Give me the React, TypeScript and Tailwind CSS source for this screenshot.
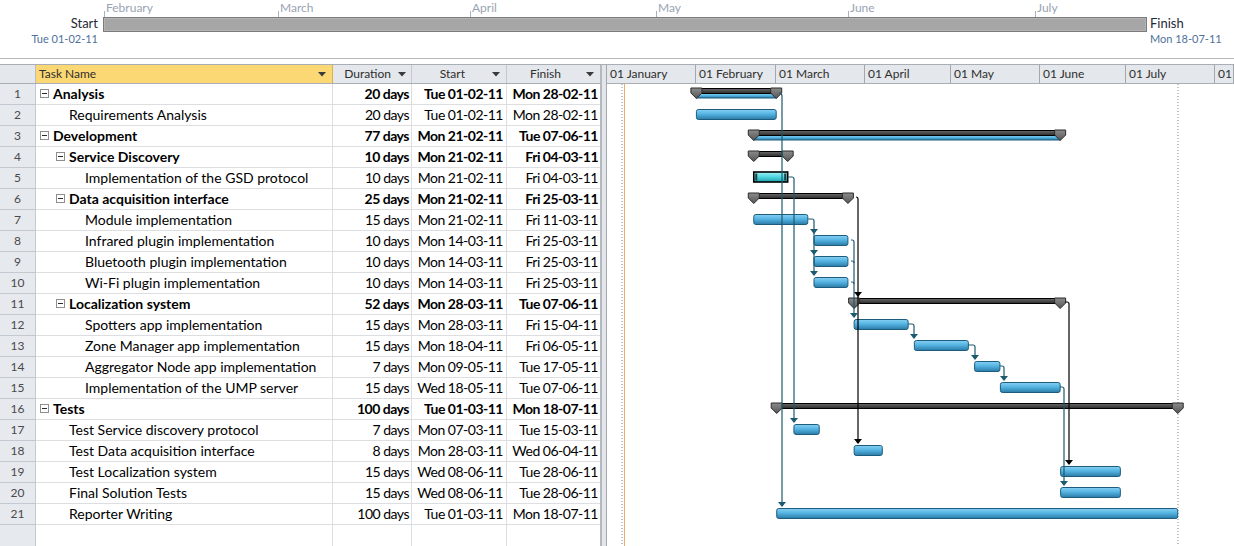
import React from 'react'

type Task = {
  id: number
  name: string
  level: number
  dur: string
  start: string
  finish: string
  s: number
  f: number
  summary?: boolean
  rollup?: boolean
  hl?: boolean
}

// s / f = day of year (0 = 01 Jan 2011)
const tasks: Task[] = [
  { id: 1, name: 'Analysis', level: 0, dur: '20 days', start: 'Tue 01-02-11', finish: 'Mon 28-02-11', s: 31, f: 58, summary: true, rollup: true },
  { id: 2, name: 'Requirements Analysis', level: 1, dur: '20 days', start: 'Tue 01-02-11', finish: 'Mon 28-02-11', s: 31, f: 58 },
  { id: 3, name: 'Development', level: 0, dur: '77 days', start: 'Mon 21-02-11', finish: 'Tue 07-06-11', s: 51, f: 157, summary: true, rollup: true },
  { id: 4, name: 'Service Discovery', level: 1, dur: '10 days', start: 'Mon 21-02-11', finish: 'Fri 04-03-11', s: 51, f: 62, summary: true },
  { id: 5, name: 'Implementation of the GSD protocol', level: 2, dur: '10 days', start: 'Mon 21-02-11', finish: 'Fri 04-03-11', s: 51, f: 62, hl: true },
  { id: 6, name: 'Data acquisition interface', level: 1, dur: '25 days', start: 'Mon 21-02-11', finish: 'Fri 25-03-11', s: 51, f: 83, summary: true },
  { id: 7, name: 'Module implementation', level: 2, dur: '15 days', start: 'Mon 21-02-11', finish: 'Fri 11-03-11', s: 51, f: 69 },
  { id: 8, name: 'Infrared plugin implementation', level: 2, dur: '10 days', start: 'Mon 14-03-11', finish: 'Fri 25-03-11', s: 72, f: 83 },
  { id: 9, name: 'Bluetooth plugin implementation', level: 2, dur: '10 days', start: 'Mon 14-03-11', finish: 'Fri 25-03-11', s: 72, f: 83 },
  { id: 10, name: 'Wi-Fi plugin implementation', level: 2, dur: '10 days', start: 'Mon 14-03-11', finish: 'Fri 25-03-11', s: 72, f: 83 },
  { id: 11, name: 'Localization system', level: 1, dur: '52 days', start: 'Mon 28-03-11', finish: 'Tue 07-06-11', s: 86, f: 157, summary: true },
  { id: 12, name: 'Spotters app implementation', level: 2, dur: '15 days', start: 'Mon 28-03-11', finish: 'Fri 15-04-11', s: 86, f: 104 },
  { id: 13, name: 'Zone Manager app implementation', level: 2, dur: '15 days', start: 'Mon 18-04-11', finish: 'Fri 06-05-11', s: 107, f: 125 },
  { id: 14, name: 'Aggregator Node app implementation', level: 2, dur: '7 days', start: 'Mon 09-05-11', finish: 'Tue 17-05-11', s: 128, f: 136 },
  { id: 15, name: 'Implementation of the UMP server', level: 2, dur: '15 days', start: 'Wed 18-05-11', finish: 'Tue 07-06-11', s: 137, f: 157 },
  { id: 16, name: 'Tests', level: 0, dur: '100 days', start: 'Tue 01-03-11', finish: 'Mon 18-07-11', s: 59, f: 198, summary: true },
  { id: 17, name: 'Test Service discovery protocol', level: 1, dur: '7 days', start: 'Mon 07-03-11', finish: 'Tue 15-03-11', s: 65, f: 73 },
  { id: 18, name: 'Test Data acquisition interface', level: 1, dur: '8 days', start: 'Mon 28-03-11', finish: 'Wed 06-04-11', s: 86, f: 95 },
  { id: 19, name: 'Test Localization system', level: 1, dur: '15 days', start: 'Wed 08-06-11', finish: 'Tue 28-06-11', s: 158, f: 178 },
  { id: 20, name: 'Final Solution Tests', level: 1, dur: '15 days', start: 'Wed 08-06-11', finish: 'Tue 28-06-11', s: 158, f: 178 },
  { id: 21, name: 'Reporter Writing', level: 1, dur: '100 days', start: 'Tue 01-03-11', finish: 'Mon 18-07-11', s: 59, f: 198 },
]

const K = 2.868
const RH = 21
const sx = (d: number) => d * K + 0.5
const ex = (d: number) => (d + 1) * K
const rowTop = (id: number) => (id - 1) * RH
const TEAL = '#1c5a70'

const indent = ['pl-[4px]', 'pl-[20px]', 'pl-[36px]']

const timelineMonths = [
  { label: 'February', x: 1 },
  { label: 'March', x: 175 },
  { label: 'April', x: 367 },
  { label: 'May', x: 553 },
  { label: 'June', x: 745 },
  { label: 'July', x: 932 },
]

const ganttMonths = [
  { label: '01 January', w: 'w-[89px]' },
  { label: '01 February', w: 'w-[80px]' },
  { label: '01 March', w: 'w-[89px]' },
  { label: '01 April', w: 'w-[86px]' },
  { label: '01 May', w: 'w-[89px]' },
  { label: '01 June', w: 'w-[86px]' },
  { label: '01 July', w: 'w-[89px]' },
  { label: '01', w: 'flex-1' },
]

function DropArrow() {
  return (
    <svg width="8" height="5" viewBox="0 0 8 5" className="shrink-0">
      <polygon points="0,0 8,0 4,4.5" fill="#3a3a3a" />
    </svg>
  )
}

function Timeline() {
  return (
    <div className="flex h-[59px] border-b border-[#b6b6b6]">
      <div className="flex w-[103px] flex-col items-end pr-[5px] pt-[15px]">
        <span className="text-[13px] leading-[16px] text-[#1f2a36]">Start</span>
        <span className="mt-[1px] text-[11px] leading-[14px] text-[#4f709c]">Tue 01-02-11</span>
      </div>
      <div className="flex w-[1044px] flex-col">
        <div className="relative h-[17px]">
          {timelineMonths.map((m) => (
            <div key={m.label} className="absolute top-0 h-[17px]" style={{ left: m.x }}>
              <span className="absolute bottom-0 left-0 h-[6px] w-px bg-[#aab2bf]" />
              <span className="block pl-[2px] pt-[1px] text-[12px] leading-[14px] text-[#99a3b3]">{m.label}</span>
            </div>
          ))}
        </div>
        <div className="h-[15px] border border-[#7b7b7b] bg-[#a6a6a6] shadow-[inset_0_0_0_1px_#b4b4b4]" />
      </div>
      <div className="flex flex-1 flex-col items-start pl-[3px] pt-[15px]">
        <span className="text-[13px] leading-[16px] text-[#1f2a36]">Finish</span>
        <span className="mt-[1px] text-[11px] leading-[14px] text-[#4f709c]">Mon 18-07-11</span>
      </div>
    </div>
  )
}

function TaskTable() {
  return (
    <div className="flex w-[600px] shrink-0 flex-col text-[14px]">
      <div className="flex h-[19px] border-b border-[#a9adb4] bg-[#e4e7eb] text-[12px] leading-[18px] text-[#2e2e2e]">
        <div className="w-[36px] shrink-0 border-r border-[#b9bec6]" />
        <div className="flex w-[297px] shrink-0 items-center justify-between border-r border-[#d9b24a] bg-[#fcd874] pl-[3px] pr-[6px]">
          <span>Task Name</span>
          <DropArrow />
        </div>
        <div className="flex w-[79px] shrink-0 items-center justify-end gap-[7px] border-r border-[#c6cad0] pr-[5px]">
          <span>Duration</span>
          <DropArrow />
        </div>
        <div className="flex w-[95px] shrink-0 items-center justify-end gap-[27px] border-r border-[#c6cad0] pr-[6px]">
          <span>Start</span>
          <DropArrow />
        </div>
        <div className="flex w-[93px] shrink-0 items-center justify-end gap-[25px] pr-[6px]">
          <span>Finish</span>
          <DropArrow />
        </div>
      </div>
      {tasks.map((t) => (
        <div key={t.id} className={`flex h-[21px] leading-[20px] ${t.summary ? 'font-bold' : ''}`}>
          <div className="w-[36px] shrink-0 border-b border-r border-[#c4c9d1] bg-[#e6e9ee] text-center text-[12px] font-normal text-[#4a4a4a]">
            {t.id}
          </div>
          <div className={`flex w-[297px] shrink-0 items-center border-b border-r border-[#dcdee1] ${indent[t.level]}`}>
            {t.summary ? (
              <span className="mr-[4px] -mt-[2px] flex h-[9px] w-[9px] shrink-0 items-center justify-center border border-[#8e8e8e] bg-white">
                <span className="h-px w-[5px] bg-[#2a2a2a]" />
              </span>
            ) : (
              <span className="w-[13px] shrink-0" />
            )}
            <span className="whitespace-nowrap">{t.name}</span>
          </div>
          <div className="w-[79px] shrink-0 border-b border-r border-[#dcdee1] pr-[2px] text-right whitespace-nowrap tracking-[-0.5px]">{t.dur}</div>
          <div className="w-[95px] shrink-0 border-b border-r border-[#dcdee1] pr-[3px] text-right whitespace-nowrap tracking-[-0.5px]">{t.start}</div>
          <div className="w-[93px] shrink-0 border-b border-[#dcdee1] pr-[2px] text-right whitespace-nowrap tracking-[-0.5px]">{t.finish}</div>
        </div>
      ))}
      <div className="flex h-[21px]">
        <div className="w-[36px] shrink-0 border-r border-[#c4c9d1] bg-[#e6e9ee]" />
        <div className="w-[297px] shrink-0 border-r border-[#dcdee1]" />
        <div className="w-[79px] shrink-0 border-r border-[#dcdee1]" />
        <div className="w-[95px] shrink-0 border-r border-[#dcdee1]" />
        <div className="w-[93px] shrink-0" />
      </div>
    </div>
  )
}

function Arrow({ x, y, c }: { x: number; y: number; c: string }) {
  return <polygon points={`${x - 4},${y - 6} ${x + 4},${y - 6} ${x},${y - 1}`} fill={c} />
}

function Tri({ x, y }: { x: number; y: number }) {
  return (
    <polygon
      points={`${x - 5.5},${y} ${x + 5.5},${y} ${x + 5.5},${y + 5} ${x},${y + 10.5} ${x - 5.5},${y + 5}`}
      fill="url(#gTri)"
      stroke="#2b2b2b"
      strokeWidth="1"
    />
  )
}

function Bars() {
  return (
    <>
      {tasks.map((t) => {
        const y = rowTop(t.id) + 4
        const x1 = sx(t.s)
        const x2 = ex(t.f)
        if (t.summary) {
          return (
            <g key={t.id}>
              {t.rollup && <rect x={x1} y={y + 5.5} width={x2 - x1} height={4.5} fill="url(#gBlue)" stroke="#1d5c7c" strokeWidth="1" />}
              <rect x={x1} y={y + 0.5} width={x2 - x1} height={5} fill="url(#gDark)" stroke="#000" strokeWidth="1" />
              <Tri x={x1} y={y} />
              <Tri x={x2} y={y} />
            </g>
          )
        }
        if (t.hl) {
          return (
            <g key={t.id}>
              <rect x={x1} y={y} width={x2 - x1} height={10} fill="url(#gCyan)" stroke="#000" strokeWidth="1.6" />
              <rect x={x1 + 1.5} y={y + 1.5} width={2} height={7} fill="#1f3f44" />
              <rect x={x2 - 3.5} y={y + 1.5} width={2} height={7} fill="#1f3f44" />
            </g>
          )
        }
        return <rect key={t.id} x={x1} y={y + 0.5} width={x2 - x1} height={10} rx={2} fill="url(#gBlue)" stroke="#1d5c7c" strokeWidth="1" />
      })}
    </>
  )
}

function Links() {
  return (
    <g fill="none" strokeWidth="1.2">
      <path d="M172 9 Q175 9 175 12 V418" stroke={TEAL} />
      <path d="M181 93 H185 Q187 93 187 95 V334" stroke={TEAL} />
      <path d="M249 113 Q251 113 251 115 V355" stroke="#000" />
      <path d="M201 135 H205 Q207 135 207 137 V187" stroke={TEAL} />
      <path d="M244 156 H245 Q247 156 247 158 V229" stroke={TEAL} />
      <path d="M244 177 H245 Q247 177 247 179" stroke={TEAL} />
      <path d="M244 198 H245 Q247 198 247 200" stroke={TEAL} />
      <path d="M301 240 H305 Q307 240 307 242 V250" stroke={TEAL} />
      <path d="M361 261 H366 Q368 261 368 263 V271" stroke={TEAL} />
      <path d="M393 282 H395 Q397 282 397 284 V292" stroke={TEAL} />
      <path d="M453 303 H455 Q457 303 457 305 V397" stroke={TEAL} />
      <path d="M458 218 H460 Q462 218 462 220 V376" stroke="#000" />
      <g stroke="none">
        <Arrow x={175} y={424} c={TEAL} />
        <Arrow x={187} y={340} c={TEAL} />
        <Arrow x={251} y={214} c="#000" />
        <Arrow x={251} y={361} c="#000" />
        <Arrow x={207} y={151} c={TEAL} />
        <Arrow x={207} y={172} c={TEAL} />
        <Arrow x={207} y={193} c={TEAL} />
        <Arrow x={247} y={235} c={TEAL} />
        <Arrow x={307} y={256} c={TEAL} />
        <Arrow x={368} y={277} c={TEAL} />
        <Arrow x={397} y={298} c={TEAL} />
        <Arrow x={457} y={403} c={TEAL} />
        <Arrow x={462} y={382} c="#000" />
      </g>
    </g>
  )
}

function GanttPanel() {
  return (
    <div className="flex flex-1 flex-col">
      <div className="flex h-[19px] border-b border-[#a9adb4] bg-[#e4e7eb] text-[12px] leading-[18px] text-[#2e2e2e]">
        {ganttMonths.map((m) => (
          <div key={m.label} className={`${m.w} shrink-0 overflow-hidden whitespace-nowrap border-r border-[#a4a8ae] pl-[3px]`}>
            {m.label}
          </div>
        ))}
      </div>
      <svg width="627" height="462" className="block">
        <defs>
          <linearGradient id="gBlue" x1="0" y1="0" x2="0" y2="1">
            <stop offset="0" stopColor="#86d0f2" />
            <stop offset="0.45" stopColor="#55b4e3" />
            <stop offset="1" stopColor="#2a7aa6" />
          </linearGradient>
          <linearGradient id="gDark" x1="0" y1="0" x2="0" y2="1">
            <stop offset="0" stopColor="#6a6a6a" />
            <stop offset="1" stopColor="#2a2a2a" />
          </linearGradient>
          <linearGradient id="gTri" x1="0" y1="0" x2="0" y2="1">
            <stop offset="0" stopColor="#8c8c8c" />
            <stop offset="1" stopColor="#555" />
          </linearGradient>
          <linearGradient id="gCyan" x1="0" y1="0" x2="0" y2="1">
            <stop offset="0" stopColor="#a4f1f5" />
            <stop offset="0.5" stopColor="#4fd6e0" />
            <stop offset="1" stopColor="#1f9fab" />
          </linearGradient>
        </defs>
        <line x1="15" y1="0" x2="15" y2="462" stroke="#8c8c8c" strokeDasharray="1 2" />
        <line x1="17.5" y1="0" x2="17.5" y2="462" stroke="#f2aa6c" />
        <line x1="571" y1="0" x2="571" y2="462" stroke="#8c8c8c" strokeDasharray="1 2" />
        <Bars />
        <Links />
      </svg>
    </div>
  )
}

export default function App() {
  return (
    <div className="h-[546px] w-[1234px] overflow-hidden bg-white font-['Lato',sans-serif] text-black">
      <Timeline />
      <div className="h-[5px]" />
      <div className="flex h-[482px] border-t border-[#a9adb4]">
        <TaskTable />
        <div className="w-[7px] shrink-0 border-l-2 border-r border-l-[#b4b8bf] border-r-[#a4a8ae] bg-[#e2e5e9]" />
        <GanttPanel />
      </div>
    </div>
  )
}
